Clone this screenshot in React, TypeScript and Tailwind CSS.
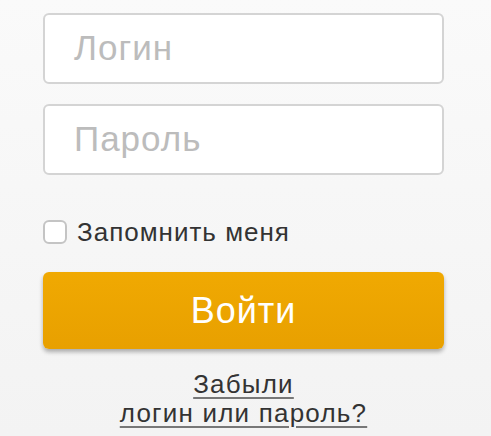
import React from "react";

export default function App() {
  return (
    <div
      className="w-[491px] h-[436px] overflow-hidden bg-gradient-to-b from-[#fafafa] to-[#f3f3f3] pt-[13px] pl-[43px]"
      style={{ fontFamily: '"Liberation Sans", Arial, sans-serif' }}
    >
      <div className="w-[401px] flex flex-col">
        <div className="h-[71px] rounded-[6px] border-2 border-[#d4d4d4] bg-white flex items-center pl-[29px] text-[35px] tracking-[1px] text-[#bcbcbc]">
          Логин
        </div>
        <div className="mt-[20px] h-[71px] rounded-[6px] border-2 border-[#d4d4d4] bg-white flex items-center pl-[29px] text-[35px] tracking-[1px] text-[#bcbcbc]">
          Пароль
        </div>
        <div className="mt-[45px] flex items-center h-[24px]">
          <div className="w-[24px] h-[24px] rounded-[6px] border-2 border-[#c4c4c4] bg-white" />
          <span className="ml-[10px] text-[26px] tracking-[1px] text-[#333333] leading-none">Запомнить меня</span>
        </div>
        <div className="mt-[28px] h-[77px] rounded-[6px] bg-gradient-to-b from-[#f0a902] to-[#e8a000] shadow-[0_3px_4px_rgba(0,0,0,0.3)] flex items-center justify-center text-[36px] tracking-[1px] text-white">
          Войти
        </div>
        <div className="mt-[21px] flex flex-col items-center text-[26px] tracking-[1.2px] leading-[29px] text-[#333333]">
          <span className="underline decoration-[#777] decoration-2 underline-offset-[4px]">Забыли</span>
          <span className="underline decoration-[#777] decoration-2 underline-offset-[4px]">логин или пароль?</span>
        </div>
      </div>
    </div>
  );
}
